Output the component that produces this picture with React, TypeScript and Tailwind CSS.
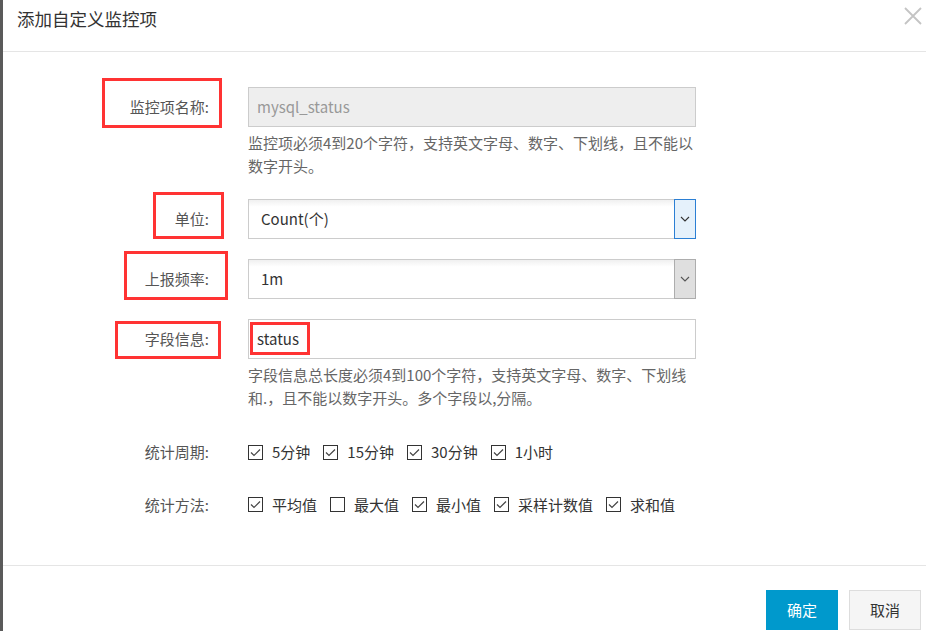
import type { ReactNode } from 'react';

const FONT = { fontFamily: '"Microsoft YaHei", "Noto Sans CJK SC", "Noto Sans", sans-serif' };

/** Red annotation frame drawn over a field */
function Mark({ className }: { className: string }) {
  return <span className={`pointer-events-none absolute border-[3px] border-[#f33] ${className}`} aria-hidden />;
}

function Row({ label, mark, children }: { label: string; mark?: string; children: ReactNode }) {
  return (
    <div className="grid grid-cols-[245px_448px]">
      <div className="relative flex h-10 items-center justify-end pr-[39px] text-[15px] text-[#555]">
        {mark && <Mark className={mark} />}
        {label}
      </div>
      {children}
    </div>
  );
}

function Help({ children }: { children: ReactNode }) {
  return <p className="mt-[4px] text-[15px] leading-[23px] text-[#666]">{children}</p>;
}

function FakeSelect({ value, focused }: { value: string; focused?: boolean }) {
  return (
    <div className="flex h-10 items-stretch border border-[#ccc] bg-gradient-to-b from-[#f0f0f0] to-white to-[18%]">
      <span className="flex flex-1 items-center pl-3 text-[15px] text-[#333]">{value}</span>
      <span
        className={`m-[-1px] flex w-[22px] items-center justify-center border ${
          focused ? 'border-[#2b7fd4] bg-[#e5f1fb]' : 'border-[#adadad] bg-[#dfdfdf]'
        }`}
      >
        <svg width="10" height="6" viewBox="0 0 10 6" fill="none">
          <path d="M1 1l4 4 4-4" stroke={focused ? '#333' : '#555'} strokeWidth="1.1" />
        </svg>
      </span>
    </div>
  );
}

function Check({ label, checked = true }: { label: string; checked?: boolean }) {
  return (
    <label className="flex items-center gap-[9px] text-[15px] text-[#333]">
      <span className="flex h-[15px] w-[15px] items-center justify-center border border-[#333] bg-white">
        {checked && (
          <svg width="11" height="9" viewBox="0 0 11 9" fill="none">
            <path d="M1 4.5l3 3 6-6" stroke="#444" strokeWidth="1.2" />
          </svg>
        )}
      </span>
      {label}
    </label>
  );
}

export default function App() {
  return (
    <div className="flex h-[631px] w-[926px] overflow-hidden bg-white" style={FONT}>
      <div className="w-[3px] shrink-0 bg-[#5a5a5a]" />
      <div className="flex min-w-0 flex-1 flex-col">
        <div className="flex h-[52px] shrink-0 items-start justify-between border-b border-[#e5e5e5]">
          <h2 className="pl-[14px] pt-[6px] text-[17.5px] leading-[26px] text-[#333]">添加自定义监控项</h2>
          <svg className="mr-[4px] mt-[7px]" width="18" height="18" viewBox="0 0 18 18" fill="none">
            <path d="M1 1l16 16M17 1L1 17" stroke="#c4c4c4" strokeWidth="1.8" />
          </svg>
        </div>

        <div className="flex-1 pt-[35px]">
          <Row label="监控项名称:" mark="left-[99px] top-[-9px] h-[50px] w-[120px]">
            <div>
              <div className="flex h-10 items-center border border-[#ccc] bg-[#eee] pl-2 text-[15px] text-[#999]">
                mysql_status
              </div>
              <Help>
                监控项必须4到20个字符，支持英文字母、数字、下划线，且不能以数字开头。
              </Help>
            </div>
          </Row>

          <div className="mt-[22px]">
            <Row label="单位:" mark="left-[150px] top-[-7px] h-[47px] w-[71px]">
              <FakeSelect value="Count(个)" focused />
            </Row>
          </div>

          <div className="mt-5">
            <Row label="上报频率:" mark="left-[121px] top-[-8px] h-[49px] w-[104px]">
              <FakeSelect value="1m" />
            </Row>
          </div>

          <div className="mt-5">
            <Row label="字段信息:" mark="left-[112px] top-[2px] h-[38px] w-[106px]">
              <div>
                <div className="relative flex h-10 items-center border border-[#ccc] bg-white pl-2 text-[15px] text-[#333]">
                  <Mark className="left-[1px] top-[2px] h-[33px] w-[60px]" />
                  status
                </div>
                <Help>
                  字段信息总长度必须4到100个字符，支持英文字母、数字、下划线和.，且不能以数字开头。多个字段以,分隔。
                </Help>
              </div>
            </Row>
          </div>

          <div className="mt-[32px] grid grid-cols-[245px_1fr] items-center">
            <div className="pr-[39px] text-right text-[15px] text-[#555]">统计周期:</div>
            <div className="flex items-center gap-[13px]">
              <Check label="5分钟" />
              <Check label="15分钟" />
              <Check label="30分钟" />
              <Check label="1小时" />
            </div>
          </div>

          <div className="mt-[30px] grid grid-cols-[245px_1fr] items-center">
            <div className="pr-[39px] text-right text-[15px] text-[#555]">统计方法:</div>
            <div className="flex items-center gap-[13px]">
              <Check label="平均值" />
              <Check label="最大值" checked={false} />
              <Check label="最小值" />
              <Check label="采样计数值" />
              <Check label="求和值" />
            </div>
          </div>
        </div>

        <div className="flex h-[66px] shrink-0 items-start justify-end gap-[11px] border-t border-[#e5e5e5] pr-[5px] pt-[24px]">
          <button className="h-10 w-[72px] bg-[#0099cc] text-[15px] text-white">确定</button>
          <button className="h-10 w-[72px] border border-[#ddd] bg-[#f5f5f5] text-[15px] text-[#333]">取消</button>
        </div>
      </div>
    </div>
  );
}
